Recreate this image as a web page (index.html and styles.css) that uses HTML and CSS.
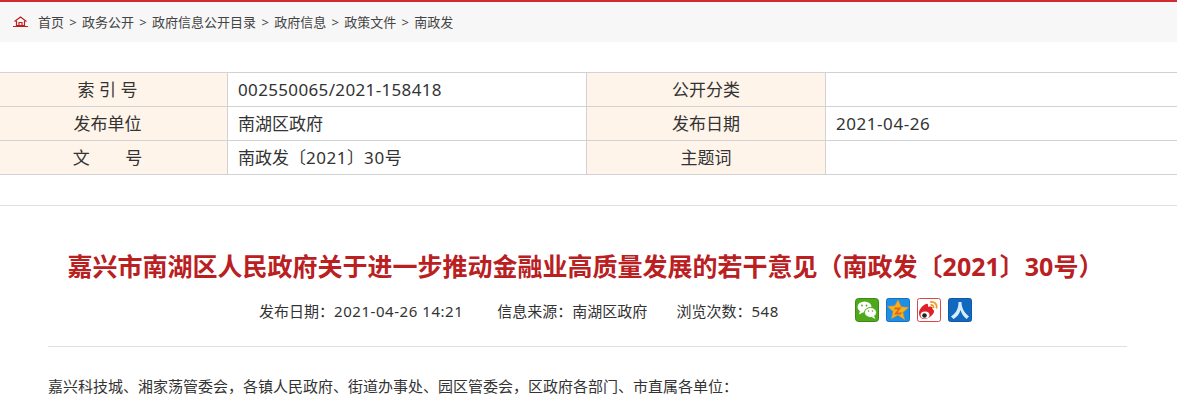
FILE: index.html
```html
<!DOCTYPE html>
<html>
<head>
    <meta charset="utf-8">
    <title>嘉兴市南湖区人民政府关于进一步推动金融业高质量发展的若干意见</title>
    <link rel="stylesheet" href="styles.css">
</head>
<body>
    <div class="crumbs">
        <svg class="home" width="15" height="11" viewBox="0 0 15 11">
            <path d="M1.500 5.500L7.500 1l6 4.500M3.500 5v4.500h8V5M6 9.500V6.500h3v3" fill="none" stroke="#b9201f" stroke-width="1.200"/>
            <path d="M0 10.500h15" stroke="#b9201f" stroke-width="1"/>
        </svg>
        <a>首页</a><span>&gt;</span><a>政务公开</a><span>&gt;</span><a>政府信息公开目录</a><span>&gt;</span><a>政府信息</a><span>&gt;</span><a>政策文件</a><span>&gt;</span><a>南政发</a>
    </div>

    <table class="info">
        <tr>
            <th>索 引 号</th><td class="index-no">002550065/2021-158418</td>
            <th>公开分类</th><td></td>
        </tr>
        <tr>
            <th>发布单位</th><td>南湖区政府</td>
            <th>发布日期</th><td class="num">2021-04-26</td>
        </tr>
        <tr>
            <th>文&nbsp;&nbsp;&nbsp;&nbsp;&nbsp;&nbsp;&nbsp;&nbsp;号</th><td>南政发〔<span class="num">2021</span>〕<span class="num">30</span>号</td>
            <th>主题词</th><td></td>
        </tr>
    </table>

    <div class="article">
        <h1>嘉兴市南湖区人民政府关于进一步推动金融业高质量发展的若干意见（南政发〔2021〕30号）</h1>
        <div class="meta">
            <span class="date">发布日期：<span class="num">2021-04-26 14:21</span></span>
            <span class="source">信息来源：南湖区政府</span>
            <span class="views">浏览次数：<span class="num">548</span></span>
            <div class="share">
                <svg width="24" height="24" viewBox="0 0 24 24">
                    <rect x="0.500" y="0.500" width="23" height="23" rx="3" fill="#4fa81c" stroke="#3d8c12"/>
                    <ellipse cx="9.500" cy="9" rx="7" ry="5.600" fill="#fff"/>
                    <path d="M5 13l-1 3.500 4-2z" fill="#fff"/>
                    <ellipse cx="15.500" cy="14.500" rx="6" ry="5" fill="#fff" stroke="#4fa81c"/>
                    <path d="M19 18l1.500 3-4-2z" fill="#fff"/>
                    <circle cx="7" cy="7.500" r="0.900" fill="#4fa81c"/>
                    <circle cx="11.500" cy="7.500" r="0.900" fill="#4fa81c"/>
                    <circle cx="13.500" cy="13" r="0.800" fill="#4fa81c"/>
                    <circle cx="17.500" cy="13" r="0.800" fill="#4fa81c"/>
                </svg>
                <svg width="24" height="24" viewBox="0 0 24 24">
                    <rect x="0.500" y="0.500" width="23" height="23" rx="2" fill="#1f8fe6" stroke="#1670c4"/>
                    <path d="M12 2l3 6.800 7.400.7-5.600 4.900 1.700 7.200L12 17l-6.500 3.600 1.700-7.200L1.600 8.500 9 7.800z" fill="#f7b21b" stroke="#e8951a" stroke-width="0.600"/>
                    <path d="M8.500 9.500h7l-4 5h4.500l-1 2h-7l4-5h-3.500z" fill="#e0641a"/>
                </svg>
                <svg width="24" height="24" viewBox="0 0 24 24">
                    <rect x="0.500" y="0.500" width="23" height="23" rx="2" fill="#fff" stroke="#d9474a"/>
                    <path d="M2 15c0-4 4-8 7-9 2-.6 2.500 1 2 3 3-1 5-.5 4.500 2 2 1 2 3 .5 5-2 3-6 5-9 5-3 0-5-3-5-6z" fill="#df2029"/>
                    <ellipse cx="8" cy="17" rx="4.500" ry="3.600" fill="#fff"/>
                    <circle cx="7.500" cy="17.500" r="2.300" fill="#222"/>
                    <path d="M13 4c4-1 7.500 2 6.500 6.500M13.500 7c2-.5 3.500 1 3 3" fill="none" stroke="#f39a1e" stroke-width="1.700"/>
                </svg>
                <svg width="24" height="24" viewBox="0 0 24 24">
                    <rect x="0.500" y="0.500" width="23" height="23" rx="2" fill="#1268be" stroke="#0f5aa8"/>
                    <path d="M10.500 4h3c0 6 3 11 7.500 14.500L18.500 21c-3-2.500-5-5.500-6-9-1 4-3.500 7-7 9L3 18.500C8.500 15 10.500 10 10.500 4z" fill="#d6eefb"/>
                </svg>
            </div>
        </div>
        <div class="body-text">
            <p>嘉兴科技城、湘家荡管委会，各镇人民政府、街道办事处、园区管委会，区政府各部门、市直属各单位：</p>
            <p class="indent">为充分发挥金融支持实体经济的引领作用，不断推动南湖区金融业创新发展和质量提升，现就进一步推动金融业高质量发展提出如下若干意见，请各地认真贯彻执行。</p>
        </div>
    </div>
</body>
</html>
```

FILE: styles.css
```css
body {
    font-family: "Noto Sans", "Noto Sans CJK SC", sans-serif;
    background-color: #fff;
    color: #333;
    margin: 0;
    padding: 0;
    height: 410px;
    overflow: hidden;
}
.num {
    letter-spacing: 0.55px;
}
.index-no {
    letter-spacing: 0.35px;
}
.crumbs {
    display: flex;
    align-items: center;
    height: 39px;
    padding-left: 13px;
    padding-bottom: 1px;
    background-color: #f7f7f7;
    border-top: 2px solid #d22b2f;
    font-size: 13px;
    color: #444;
}
.crumbs .home {
    margin-right: 10px;
}
.crumbs span {
    margin: 0 5.300px;
}
.info {
    width: 100%;
    margin-top: 30px;
    border-collapse: collapse;
    table-layout: fixed;
    font-size: 17px;
    line-height: 24px;
}
.info th, .info td {
    height: 33px;
    padding: 0;
    border: 1px solid #d2d2d2;
    border-left: 0;
    font-weight: normal;
}
.info th {
    background-color: #fef4e9;
    text-align: center;
}
.info td {
    padding-left: 10px;
}
.info th:nth-child(1) { width: 215px; padding-right: 12px; }
.info td:nth-child(2) { width: 348px; }
.info th:nth-child(3) { width: 238px; }
.info td:nth-child(4) { border-right: 0; }
.article {
    margin-top: 30px;
    padding: 0 50px 0 48px;
    border-top: 1px solid #e0e0e0;
}
h1 {
    margin: 42px -20px 0 -24px;
    text-align: center;
    font-size: 25px;
    line-height: 36px;
    color: #b9201f;
}
.meta {
    display: flex;
    align-items: center;
    height: 36px;
    margin-top: 8px;
    padding-left: 211px;
    padding-bottom: 18px;
    font-size: 15px;
    border-bottom: 1px solid #e0e0e0;
}
.source { margin-left: 34px; }
.views { margin-left: 29px; }
.share {
    display: flex;
    gap: 7px;
    margin-left: 76px;
}
.body-text {
    font-size: 15px;
    line-height: 32px;
    margin-top: 23px;
}
.body-text p {
    margin: 0 0 6px;
}
.indent {
    text-indent: 2em;
}
```
